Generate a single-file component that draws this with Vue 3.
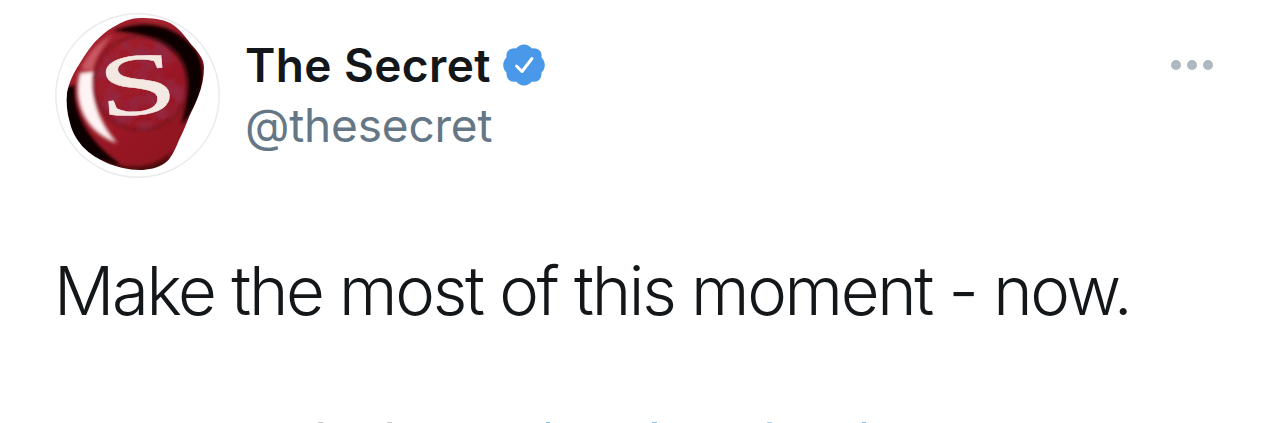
<script setup>
const handle = '@thesecret'
const marks = [
  { id: 1, width: 5, gap: 318, color: '#c3cad1' },
  { id: 2, width: 5, gap: 64, color: '#c3cad1' },
  { id: 3, width: 4, gap: 154, color: '#8cc3ea' },
  { id: 4, width: 5, gap: 102, color: '#8cc3ea' },
  { id: 5, width: 5, gap: 110, color: '#a9d4f0' },
  { id: 6, width: 4, gap: 90, color: '#8cc3ea' }
]
</script>

<template>
  <main class="page">
    <header class="head">
      <div class="author">
        <svg class="avatar" viewBox="0 0 165 165" role="img" aria-label="The Secret logo">
          <defs>
            <linearGradient id="wax" x1="0" y1="0" x2="1" y2="1">
              <stop offset="0" stop-color="#a92430" />
              <stop offset=".5" stop-color="#9c1a27" />
              <stop offset="1" stop-color="#84131d" />
            </linearGradient>
            <filter id="soft" x="-20%" y="-20%" width="140%" height="140%"><feGaussianBlur stdDeviation="1.500" /></filter>
            <filter id="edge" x="-10%" y="-10%" width="120%" height="120%"><feGaussianBlur stdDeviation="0.800" /></filter>
            <filter id="mottle" x="0" y="0" width="100%" height="100%">
              <feTurbulence type="fractalNoise" baseFrequency="0.06" numOctaves="3" seed="9" />
              <feColorMatrix values="0 0 0 0 0.30  0 0 0 0 0.02  0 0 0 0 0.05  3.200 0 0 0 -1.250" />
              <feGaussianBlur stdDeviation="0.800" />
            </filter>
            <clipPath id="seal"><path d="M85 5C97 5 107 6 115 10C124 15 130 23 135 30C142 38 149 45 149 54C149 64 147 74 143 84C140 92 137 97 134 104C131 112 128 119 124 127C120 137 116 146 110 150C103 155 93 157 85 157C73 157 62 154 52 150C43 146 35 141 28 134C22 127 17 119 15 110C12 100 11 90 12 80C14 69 19 59 25 50C31 40 37 31 45 24C50 19 56 15 62 12C69 8 77 5 85 5Z" /></clipPath>
            <clipPath id="disc"><circle cx="86" cy="70" r="48" /></clipPath>
          </defs>
          <circle cx="82.500" cy="82.500" r="81.700" class="ring" />
          <g clip-path="url(#seal)" filter="url(#edge)">
            <rect width="165" height="165" fill="url(#wax)" />
            <path d="M0 76L20 72C18 98 32 126 64 150L60 170L0 150Z" fill="#0e0304" filter="url(#soft)" />
            <path d="M46 146C70 156 96 158 118 138L104 170L46 170Z" fill="#4e0a10" filter="url(#soft)" />
            <path d="M25 60C18 86 28 118 62 130C46 112 35 88 39 58Z" fill="#fff4f5" filter="url(#soft)" />
            <path d="M26 56C33 40 43 30 57 22C46 36 40 46 38 58Z" fill="#c85a65" filter="url(#soft)" />
            <g clip-path="url(#disc)">
              <rect width="165" height="165" filter="url(#mottle)" />
            </g>
            <path d="M58 18C84 7 118 8 140 36C154 56 150 90 126 112C134 84 136 60 122 42C106 24 82 20 58 18Z" fill="#090102" filter="url(#soft)" />
            <path d="M84 4C100 4 118 10 132 26L118 15C108 10 96 8 84 8Z" fill="#a52a35" filter="url(#soft)" />
            <circle cx="86" cy="70" r="47" fill="none" stroke="#5c0c13" stroke-width="2" filter="url(#soft)" opacity=".7" />
          </g>
          <text transform="translate(85 101) rotate(-5) scale(1.620 1)" class="seal-letter">S</text>
        </svg>
        <div class="names">
          <div class="name-row">
            <span class="name">The Secret</span>
            <svg class="badge" viewBox="0 0 44 44" aria-label="Verified">
              <path d="M22 1.500C25.500 1.500 28 3.500 30 5.500C33 5 36.500 6 38 8C40 10 39.500 13 39.500 14.500C41.500 16.500 42.800 19 42.800 22C42.800 25 41.500 27.500 39.500 29.500C39.500 32 39.500 34 37.500 36.500C35.500 38.500 33 39 30 38.500C28 40.500 25.500 42.500 22 42.500C18.500 42.500 16 40.500 14 38.500C11 39 8.500 38.500 6.500 36.500C4.500 34 4.500 32 4.500 29.500C2.500 27.500 1.200 25 1.200 22C1.200 19 2.500 16.500 4.500 14.500C4.500 13 4 10 6 8C7.500 6 11 5 14 5.500C16 3.500 18.500 1.500 22 1.500Z" fill="#4a98e9" />
              <path d="M14.500 23L20 28.500L30 15.500" fill="none" stroke="#fff" stroke-width="3" stroke-linecap="round" stroke-linejoin="round" />
            </svg>
          </div>
          <div class="handle">{{ handle }}</div>
        </div>
      </div>
      <div class="more" aria-label="More">
        <span class="dot"></span><span class="dot"></span><span class="dot"></span>
      </div>
    </header>
    <p class="tweet">Make the most of this moment - now.</p>
    <div class="marks">
      <span
        v-for="mark in marks"
        :key="mark.id"
        class="mark"
        :style="{ width: mark.width + 'px', marginLeft: mark.gap + 'px', background: mark.color }"
      ></span>
    </div>
  </main>
</template>

<style scoped>
.page {
  position: relative;
  width: 1272px;
  height: 423px;
  box-sizing: border-box;
  padding: 13px 59px 0 55px;
  background: #fff;
  overflow: hidden;
  font-family: Inter, "Liberation Sans", sans-serif;
}
.head {
  display: flex;
  justify-content: space-between;
  align-items: flex-start;
}
.author {
  display: flex;
  align-items: flex-start;
  gap: 25px;
}
.avatar {
  width: 165px;
  height: 165px;
  display: block;
}
.ring {
  fill: #fff;
  stroke: #e9ebee;
  stroke-width: 1.500;
}
.seal-letter {
  font-family: "Liberation Serif", serif;
  font-weight: 400;
  font-size: 88px;
  fill: #f4e8e2;
  stroke: #f4e8e2;
  stroke-width: 0.5px;
  text-anchor: middle;
}
.names {
  display: flex;
  flex-direction: column;
  padding-top: 25px;
}
.name-row {
  display: flex;
  align-items: center;
  gap: 11px;
  height: 54px;
}
.name {
  font-size: 46px;
  line-height: 54px;
  font-weight: 600;
  color: #14171a;
  letter-spacing: 0.4px;
}
.badge {
  width: 44px;
  height: 44px;
  flex: none;
}
.handle {
  margin-top: 6px;
  font-size: 46px;
  line-height: 54px;
  font-weight: 400;
  color: #657786;
  letter-spacing: -0.2px;
}
.more {
  display: flex;
  gap: 6px;
  margin-top: 47px;
}
.dot {
  width: 10px;
  height: 10px;
  border-radius: 50%;
  background: #aeb8c2;
}
.tweet {
  margin: 71px 0 0 -1px;
  font-size: 67px;
  line-height: 84px;
  font-weight: 300;
  color: #14171a;
  letter-spacing: -2.3px;
  white-space: nowrap;
}
.marks {
  position: absolute;
  left: 0;
  right: 0;
  bottom: 0;
  display: flex;
  height: 1px;
}
.mark {
  display: block;
  height: 1px;
  flex: none;
}
</style>
